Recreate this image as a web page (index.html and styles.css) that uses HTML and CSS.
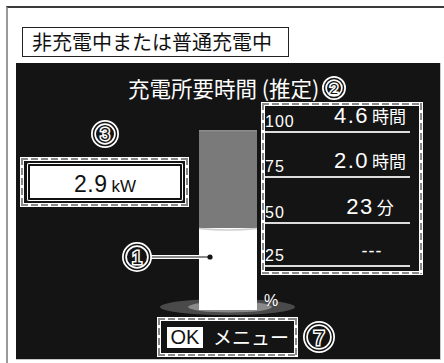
FILE: index.html
```html
<!DOCTYPE html>
<html lang="ja">
<head>
<meta charset="utf-8">
<title>充電所要時間</title>
<link rel="stylesheet" href="styles.css">
</head>
<body>
<div class="frame">
  <div class="title">非充電中または普通充電中</div>
  <div class="panel">
    <div class="heading">
      <span class="heading-text">充電所要時間 (推定)</span>
      <svg class="callout c2" viewBox="0 0 24 24"><circle cx="12" cy="12" r="9.5" class="halo-ring"/><circle cx="12" cy="12" r="9.5" class="ring"/><text x="12" y="12.5" class="digit d2">2</text></svg>
    </div>
    <div class="main">
      <div class="left">
        <svg class="callout c3" viewBox="0 0 28 28"><circle cx="14" cy="14" r="11.5" class="halo-ring"/><circle cx="14" cy="14" r="11.5" class="ring"/><text x="14" y="14.5" class="digit d3">3</text></svg>
        <div class="dashed kw-box">
          <div class="kw-inner"><span class="kw-num">2.9</span><span class="kw-unit">kW</span></div>
        </div>
      </div>
      <svg class="cylinder" viewBox="0 0 58 180">
        <ellipse cx="28.5" cy="177" rx="67.5" ry="8" fill="#4a4a4a"/>
        <ellipse cx="31" cy="177" rx="42" ry="5.5" fill="#8a8a8a"/>
        <rect x="0" y="0" width="58" height="99" fill="#7a7a7a"/>
        <rect x="0" y="0" width="58" height="1.5" fill="#8c8c8c"/>
        <rect x="0" y="98" width="58" height="82" fill="#ffffff"/>
        <path d="M0 98.5 Q29 101.5 58 98.5" stroke="#cfcfcf" fill="none" stroke-width="1.5"/>
      </svg>
      <div class="right">
        <div class="dashed scale">
          <div class="row"><span class="lbl">100</span><span class="val"><span class="num">4.6</span><span class="unit">時間</span></span></div>
          <div class="row"><span class="lbl">75</span><span class="val"><span class="num">2.0</span><span class="unit">時間</span></span></div>
          <div class="row"><span class="lbl">50</span><span class="val"><span class="num">23</span><span class="unit">分</span></span></div>
          <div class="row"><span class="lbl">25</span><span class="val dash">---</span></div>
        </div>
        <div class="pct">%</div>
      </div>
      <svg class="pointer" viewBox="0 0 92 30">
        <line x1="28" y1="15" x2="88" y2="15" stroke="#fff" stroke-width="4"/>
        <line x1="28" y1="15" x2="88" y2="15" stroke="#141414" stroke-width="1.2"/>
        <circle cx="88" cy="15" r="2.6" fill="#141414"/>
        <circle cx="15" cy="15" r="12.5" class="halo-ring"/>
        <circle cx="15" cy="15" r="12.5" class="ring"/>
        <text x="15" y="15.5" class="digit d1">1</text>
      </svg>
    </div>
    <div class="bottom">
      <div class="dashed ok-box"><span class="ok">OK</span><span class="menu">メニュー</span></div>
      <svg class="callout c7" viewBox="0 0 32 32"><circle cx="16" cy="16" r="13.5" class="halo-ring"/><circle cx="16" cy="16" r="13.5" class="ring"/><text x="16" y="16.5" class="digit d7">7</text></svg>
    </div>
  </div>
</div>
</body>
</html>
```

FILE: styles.css
```css
* { box-sizing: border-box; }
html, body { margin: 0; padding: 0; background: #fff; overflow: hidden; }
body {
  width: 444px;
  height: 363px;
  font-family: "Liberation Sans", "Noto Sans CJK JP", sans-serif;
}
.frame {
  margin: 6px 0 0 6px;
  width: 438px;
  height: 357px;
  border-top: 2px solid #3a3a3a;
  border-left: 2px solid #9a9a9a;
  padding: 19px 0 0 8px;
}
.title {
  margin-left: 6px;
  width: 267px;
  height: 30px;
  border: 1px solid #222;
  padding-left: 9px;
  font-family: "Noto Sans CJK JP", sans-serif;
  font-size: 20px;
  line-height: 28px;
  color: #111;
}
.panel {
  margin-top: 6px;
  width: 425px;
  height: 297px;
  background: #141414;
  border-right: 1px solid #c8c8c8;
  border-bottom: 1px solid #c8c8c8;
  display: flex;
  flex-direction: column;
}
.heading {
  display: flex;
  align-items: center;
  height: 38px;
  padding: 12px 0 0 112px;
  color: #fff;
}
.heading-text {
  font-family: "Noto Sans CJK JP", sans-serif;
  font-size: 21.5px;
  line-height: 26px;
}
.callout { display: block; flex: none; overflow: visible; }
.c2 { width: 24px; height: 24px; margin-left: 3px; }
.c3 { width: 28px; height: 28px; margin: 19px 0 0 75px; }
.c7 { width: 32px; height: 32px; margin-left: 5px; }
.halo-ring { fill: #141414; stroke: #fff; stroke-width: 5; }
.ring { fill: none; stroke: #141414; stroke-width: 1.5; }
.digit {
  font-family: "Liberation Sans", sans-serif;
  fill: #141414;
  stroke: #fff;
  stroke-width: 3px;
  paint-order: stroke;
  text-anchor: middle;
  dominant-baseline: central;
}
.d1 { font-size: 18px; }
.d2 { font-size: 15px; }
.d3 { font-size: 17px; }
.d7 { font-size: 20px; }

.main {
  position: relative;
  display: flex;
  height: 216px;
}
.left {
  width: 183px;
  flex: none;
  display: flex;
  flex-direction: column;
}
.dashed {
  position: relative;
  border: 4px solid #fff;
  background: #141414;
}
.dashed::before {
  content: "";
  position: absolute;
  inset: -3px;
  pointer-events: none;
  background:
    repeating-linear-gradient(90deg, #8a8a8a 0 7px, transparent 7px 10px) left top / 100% 2px no-repeat,
    repeating-linear-gradient(90deg, #8a8a8a 0 7px, transparent 7px 10px) left bottom / 100% 2px no-repeat,
    repeating-linear-gradient(180deg, #8a8a8a 0 7px, transparent 7px 10px) left top / 2px 100% no-repeat,
    repeating-linear-gradient(180deg, #8a8a8a 0 7px, transparent 7px 10px) right top / 2px 100% no-repeat;
}
.kw-box {
  margin: 9px 0 0 4px;
  width: 169px;
  height: 50px;
  padding: 2px 2px 2px 3px;
  display: flex;
}
.kw-inner {
  flex: 1;
  background: #fff;
  border-radius: 2px;
  box-shadow: inset 0 0 0 1px #fff, inset 0 0 0 3px #111;
  color: #111;
  text-align: center;
  padding-top: 5px;
  line-height: 33px;
  font-size: 23px;
  white-space: nowrap;
}
.kw-num { font-size: 23px; letter-spacing: 0.5px; }
.kw-unit { font-size: 17px; margin-left: 4px; }

.cylinder {
  display: block;
  flex: none;
  width: 58px;
  height: 180px;
  margin-top: 29px;
  overflow: visible;
}
.right {
  margin-left: 4px;
  display: flex;
  flex-direction: column;
}
.scale {
  margin-top: 1px;
  width: 162px;
  height: 173px;
  display: grid;
  grid-template-rows: 27px 45px 46px 43px;
  padding-right: 9px;
}
.row {
  display: flex;
  align-items: flex-end;
  border-bottom: 2px solid #dcdcdc;
  color: #fff;
}
.lbl {
  flex: 1;
  font-size: 16px;
  line-height: 1;
  letter-spacing: 1px;
  margin-bottom: 1px;
}
.val {
  width: 80px;
  text-align: center;
  font-size: 22px;
  line-height: 1;
  margin-bottom: 4px;
  white-space: nowrap;
}
.num { font-size: 22px; letter-spacing: 1.5px; }
.unit {
  font-family: "Noto Sans CJK JP", sans-serif;
  font-size: 17px;
  margin-left: 3px;
}
.val.dash {
  font-size: 18px;
  letter-spacing: 1px;
  margin-bottom: 5px;
  padding-left: 4px;
}
.pct {
  margin: 18px 0 0 3px;
  font-size: 16px;
  line-height: 16px;
  color: #fff;
}
.pointer {
  position: absolute;
  left: 106px;
  top: 141px;
  width: 92px;
  height: 30px;
  overflow: visible;
}
.bottom {
  display: flex;
  align-items: center;
  height: 40px;
  padding-left: 141px;
}
.ok-box {
  width: 141px;
  height: 40px;
  padding-left: 6px;
  display: flex;
  align-items: center;
}
.ok {
  display: block;
  width: 36px;
  height: 21px;
  background: #fff;
  color: #111;
  font-size: 20px;
  line-height: 21px;
  text-align: center;
}
.menu {
  margin-left: 10px;
  color: #fff;
  font-family: "Noto Sans CJK JP", sans-serif;
  font-size: 19px;
  line-height: 24px;
}
```
